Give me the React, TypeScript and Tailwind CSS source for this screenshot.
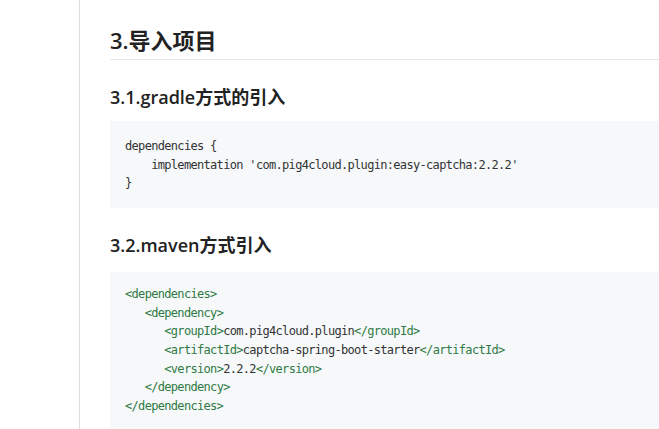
import React from "react";

const mono = "font-['DejaVu_Sans_Mono','Liberation_Mono',monospace]";

function Tag({ children }: { children: React.ReactNode }) {
  return <span className="text-[#2f7a44]">{children}</span>;
}

export default function App() {
  return (
    <div className="flex min-h-[429px] w-[659px] overflow-hidden bg-white text-[#333] font-['Open_Sans','Noto_Sans_CJK_SC',sans-serif]">
      <div className="w-[80px] shrink-0 border-r border-[#dedede]" />
      <div className="flex-1 pl-[30px]">
        <h2 className="mt-[25px] border-b border-[#e6e6e6] pb-[4px] text-[22px] leading-[30px] font-bold text-[#222]">
          <span className="font-semibold">3.</span>导入项目
        </h2>
        <h3 className="mt-[24px] text-[18px] leading-[26px] font-bold text-[#222]">
          <span className="font-semibold">3.1.gradle</span>方式的引入
        </h3>
        <div className="mt-[11px] bg-[#f6f8fa] pl-[15px] pt-[16px] pb-[15px]">
          <pre className={`${mono} text-[12px] leading-[18.67px] tracking-[-0.68px] text-[#333]`}>{`dependencies {
    implementation 'com.pig4cloud.plugin:easy-captcha:2.2.2'
}`}</pre>
        </div>
        <h3 className="mt-[24px] text-[18px] leading-[26px] font-bold text-[#222]">
          <span className="font-semibold">3.2.maven</span>方式引入
        </h3>
        <div className="mt-[14px] bg-[#f6f8fa] pl-[15px] pt-[13px] pb-[20px]">
          <pre className={`${mono} text-[12px] leading-[18.67px] tracking-[-0.68px] text-[#333]`}>
            <Tag>&lt;dependencies&gt;</Tag>
            {"\n   "}
            <Tag>&lt;dependency&gt;</Tag>
            {"\n      "}
            <Tag>&lt;groupId&gt;</Tag>com.pig4cloud.plugin<Tag>&lt;/groupId&gt;</Tag>
            {"\n      "}
            <Tag>&lt;artifactId&gt;</Tag>captcha-spring-boot-starter<Tag>&lt;/artifactId&gt;</Tag>
            {"\n      "}
            <Tag>&lt;version&gt;</Tag>2.2.2<Tag>&lt;/version&gt;</Tag>
            {"\n   "}
            <Tag>&lt;/dependency&gt;</Tag>
            {"\n"}
            <Tag>&lt;/dependencies&gt;</Tag>
          </pre>
        </div>
      </div>
    </div>
  );
}
